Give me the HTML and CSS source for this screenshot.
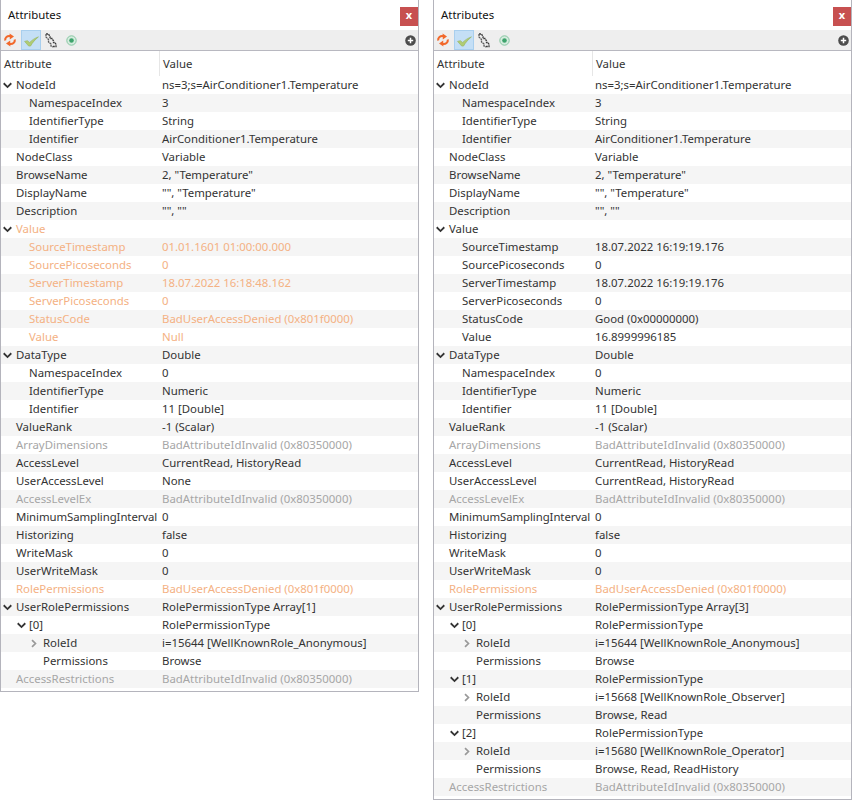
FILE: index.html
```html
<!DOCTYPE html>
<html lang="en">
<head>
<meta charset="utf-8">
<title>Attributes</title>
<link rel="stylesheet" href="styles.css">
</head>
<body>
<svg class="defs" width="0" height="0" aria-hidden="true">
  <symbol id="open" viewBox="0 0 10 7"><path d="M.8 1 5 5.2 9.2 1" fill="none" stroke="currentColor" stroke-width="2"/></symbol>
  <symbol id="closed" viewBox="0 0 7 10"><path d="M1.2 1 5.2 5 1.2 9" fill="none" stroke="currentColor" stroke-width="2"/></symbol>
  <symbol id="refresh" viewBox="0 0 14 14"><path d="M2.2 7.5C1.8 4.6 4.2 2.4 7.6 3.2" fill="none" stroke="#f2682a" stroke-width="2.1"/><path d="M6.6.4 11 3.4 6.8 6.6Z" fill="#f2682a"/><path d="M11.8 6.5C12.2 9.4 9.8 11.6 6.4 10.8" fill="none" stroke="#f2682a" stroke-width="2.1"/><path d="M7.4 13.6 3 10.6 7.2 7.4Z" fill="#f2682a"/></symbol>
  <symbol id="check" viewBox="0 0 16 12"><path d="M.6 6.4 3.6 5.6 6 7.6C8.4 5 11.4 3 15.4 1.6 12 4.4 9.2 7.4 7 11.4L5 11.4Z" fill="#b0cc74" stroke="#94b25a" stroke-width=".6"/></symbol>
  <symbol id="tree" viewBox="0 0 12 15"><path d="M1 1H3.5L5 3.5V5.5H7L8.5 8V9.5H10L11 11.5V13.5H8" fill="none" stroke="#3c3c3c" stroke-width="1.3" stroke-dasharray="2 .6"/><path d="M1 1V4L3.5 6.5V9L6 11V13L8 14" fill="none" stroke="#5c5c5c" stroke-width="1.3" stroke-dasharray="2 .6"/></symbol>
  <symbol id="target" viewBox="0 0 11 11"><circle cx="5.5" cy="5.5" r="4.7" fill="#d6ecdf" stroke="#86c6a2"/><circle cx="5.5" cy="5.5" r="2.3" fill="#3ea36c"/></symbol>
  <symbol id="add" viewBox="0 0 11 11"><circle cx="5.5" cy="5.5" r="5.3" fill="#4c4c4c"/><path d="M5.5 2.8V8.2M2.8 5.5H8.2" stroke="#fff" stroke-width="1.5"/></symbol>
</svg>
<main class="desk">
<section class="panel">
  <header class="title"><h2>Attributes</h2><button class="close">x</button></header>
  <div class="tools">
    <span class="tool"><svg class="i14"><use href="#refresh"/></svg></span>
    <span class="tool on"><svg class="i16"><use href="#check"/></svg></span>
    <span class="tool"><svg class="i-tree"><use href="#tree"/></svg></span>
    <span class="tool"><svg class="i11"><use href="#target"/></svg></span>
    <svg class="i11 plus"><use href="#add"/></svg>
  </div>
  <div class="head"><div class="hname">Attribute</div><div class="hvalue">Value</div></div>
  <div class="rows">
    <div class="row"><div class="name l0"><svg class="tw"><use href="#open"/></svg>NodeId</div><div class="val">ns=3;s=AirConditioner1.Temperature</div></div>
    <div class="row"><div class="name l1"><i class="tw"></i>NamespaceIndex</div><div class="val">3</div></div>
    <div class="row"><div class="name l1"><i class="tw"></i>IdentifierType</div><div class="val">String</div></div>
    <div class="row"><div class="name l1"><i class="tw"></i>Identifier</div><div class="val">AirConditioner1.Temperature</div></div>
    <div class="row"><div class="name l0"><i class="tw"></i>NodeClass</div><div class="val">Variable</div></div>
    <div class="row"><div class="name l0"><i class="tw"></i>BrowseName</div><div class="val">2, "Temperature"</div></div>
    <div class="row"><div class="name l0"><i class="tw"></i>DisplayName</div><div class="val">"", "Temperature"</div></div>
    <div class="row"><div class="name l0"><i class="tw"></i>Description</div><div class="val">"", ""</div></div>
    <div class="row denied"><div class="name l0"><svg class="tw"><use href="#open"/></svg>Value</div><div class="val"></div></div>
    <div class="row denied"><div class="name l1"><i class="tw"></i>SourceTimestamp</div><div class="val">01.01.1601 01:00:00.000</div></div>
    <div class="row denied"><div class="name l1"><i class="tw"></i>SourcePicoseconds</div><div class="val">0</div></div>
    <div class="row denied"><div class="name l1"><i class="tw"></i>ServerTimestamp</div><div class="val">18.07.2022 16:18:48.162</div></div>
    <div class="row denied"><div class="name l1"><i class="tw"></i>ServerPicoseconds</div><div class="val">0</div></div>
    <div class="row denied"><div class="name l1"><i class="tw"></i>StatusCode</div><div class="val">BadUserAccessDenied (0x801f0000)</div></div>
    <div class="row denied"><div class="name l1"><i class="tw"></i>Value</div><div class="val">Null</div></div>
    <div class="row"><div class="name l0"><svg class="tw"><use href="#open"/></svg>DataType</div><div class="val">Double</div></div>
    <div class="row"><div class="name l1"><i class="tw"></i>NamespaceIndex</div><div class="val">0</div></div>
    <div class="row"><div class="name l1"><i class="tw"></i>IdentifierType</div><div class="val">Numeric</div></div>
    <div class="row"><div class="name l1"><i class="tw"></i>Identifier</div><div class="val">11 [Double]</div></div>
    <div class="row"><div class="name l0"><i class="tw"></i>ValueRank</div><div class="val">-1 (Scalar)</div></div>
    <div class="row invalid"><div class="name l0"><i class="tw"></i>ArrayDimensions</div><div class="val">BadAttributeIdInvalid (0x80350000)</div></div>
    <div class="row"><div class="name l0"><i class="tw"></i>AccessLevel</div><div class="val">CurrentRead, HistoryRead</div></div>
    <div class="row"><div class="name l0"><i class="tw"></i>UserAccessLevel</div><div class="val">None</div></div>
    <div class="row invalid"><div class="name l0"><i class="tw"></i>AccessLevelEx</div><div class="val">BadAttributeIdInvalid (0x80350000)</div></div>
    <div class="row"><div class="name l0"><i class="tw"></i><span class="fit">MinimumSamplingInterval</span></div><div class="val">0</div></div>
    <div class="row"><div class="name l0"><i class="tw"></i>Historizing</div><div class="val">false</div></div>
    <div class="row"><div class="name l0"><i class="tw"></i>WriteMask</div><div class="val">0</div></div>
    <div class="row"><div class="name l0"><i class="tw"></i>UserWriteMask</div><div class="val">0</div></div>
    <div class="row denied"><div class="name l0"><i class="tw"></i>RolePermissions</div><div class="val">BadUserAccessDenied (0x801f0000)</div></div>
    <div class="row"><div class="name l0"><svg class="tw"><use href="#open"/></svg>UserRolePermissions</div><div class="val">RolePermissionType Array[1]</div></div>
    <div class="row"><div class="name l1"><svg class="tw"><use href="#open"/></svg>[0]</div><div class="val">RolePermissionType</div></div>
    <div class="row"><div class="name l2"><svg class="tw shut"><use href="#closed"/></svg>RoleId</div><div class="val">i=15644 [WellKnownRole_Anonymous]</div></div>
    <div class="row"><div class="name l2"><i class="tw"></i>Permissions</div><div class="val">Browse</div></div>
    <div class="row invalid"><div class="name l0"><i class="tw"></i>AccessRestrictions</div><div class="val">BadAttributeIdInvalid (0x80350000)</div></div>
  </div>
</section>
<section class="panel">
  <header class="title"><h2>Attributes</h2><button class="close">x</button></header>
  <div class="tools">
    <span class="tool"><svg class="i14"><use href="#refresh"/></svg></span>
    <span class="tool on"><svg class="i16"><use href="#check"/></svg></span>
    <span class="tool"><svg class="i-tree"><use href="#tree"/></svg></span>
    <span class="tool"><svg class="i11"><use href="#target"/></svg></span>
    <svg class="i11 plus"><use href="#add"/></svg>
  </div>
  <div class="head"><div class="hname">Attribute</div><div class="hvalue">Value</div></div>
  <div class="rows">
    <div class="row"><div class="name l0"><svg class="tw"><use href="#open"/></svg>NodeId</div><div class="val">ns=3;s=AirConditioner1.Temperature</div></div>
    <div class="row"><div class="name l1"><i class="tw"></i>NamespaceIndex</div><div class="val">3</div></div>
    <div class="row"><div class="name l1"><i class="tw"></i>IdentifierType</div><div class="val">String</div></div>
    <div class="row"><div class="name l1"><i class="tw"></i>Identifier</div><div class="val">AirConditioner1.Temperature</div></div>
    <div class="row"><div class="name l0"><i class="tw"></i>NodeClass</div><div class="val">Variable</div></div>
    <div class="row"><div class="name l0"><i class="tw"></i>BrowseName</div><div class="val">2, "Temperature"</div></div>
    <div class="row"><div class="name l0"><i class="tw"></i>DisplayName</div><div class="val">"", "Temperature"</div></div>
    <div class="row"><div class="name l0"><i class="tw"></i>Description</div><div class="val">"", ""</div></div>
    <div class="row"><div class="name l0"><svg class="tw"><use href="#open"/></svg>Value</div><div class="val"></div></div>
    <div class="row"><div class="name l1"><i class="tw"></i>SourceTimestamp</div><div class="val">18.07.2022 16:19:19.176</div></div>
    <div class="row"><div class="name l1"><i class="tw"></i>SourcePicoseconds</div><div class="val">0</div></div>
    <div class="row"><div class="name l1"><i class="tw"></i>ServerTimestamp</div><div class="val">18.07.2022 16:19:19.176</div></div>
    <div class="row"><div class="name l1"><i class="tw"></i>ServerPicoseconds</div><div class="val">0</div></div>
    <div class="row"><div class="name l1"><i class="tw"></i>StatusCode</div><div class="val">Good (0x00000000)</div></div>
    <div class="row"><div class="name l1"><i class="tw"></i>Value</div><div class="val">16.8999996185</div></div>
    <div class="row"><div class="name l0"><svg class="tw"><use href="#open"/></svg>DataType</div><div class="val">Double</div></div>
    <div class="row"><div class="name l1"><i class="tw"></i>NamespaceIndex</div><div class="val">0</div></div>
    <div class="row"><div class="name l1"><i class="tw"></i>IdentifierType</div><div class="val">Numeric</div></div>
    <div class="row"><div class="name l1"><i class="tw"></i>Identifier</div><div class="val">11 [Double]</div></div>
    <div class="row"><div class="name l0"><i class="tw"></i>ValueRank</div><div class="val">-1 (Scalar)</div></div>
    <div class="row invalid"><div class="name l0"><i class="tw"></i>ArrayDimensions</div><div class="val">BadAttributeIdInvalid (0x80350000)</div></div>
    <div class="row"><div class="name l0"><i class="tw"></i>AccessLevel</div><div class="val">CurrentRead, HistoryRead</div></div>
    <div class="row"><div class="name l0"><i class="tw"></i>UserAccessLevel</div><div class="val">CurrentRead, HistoryRead</div></div>
    <div class="row invalid"><div class="name l0"><i class="tw"></i>AccessLevelEx</div><div class="val">BadAttributeIdInvalid (0x80350000)</div></div>
    <div class="row"><div class="name l0"><i class="tw"></i><span class="fit">MinimumSamplingInterval</span></div><div class="val">0</div></div>
    <div class="row"><div class="name l0"><i class="tw"></i>Historizing</div><div class="val">false</div></div>
    <div class="row"><div class="name l0"><i class="tw"></i>WriteMask</div><div class="val">0</div></div>
    <div class="row"><div class="name l0"><i class="tw"></i>UserWriteMask</div><div class="val">0</div></div>
    <div class="row denied"><div class="name l0"><i class="tw"></i>RolePermissions</div><div class="val">BadUserAccessDenied (0x801f0000)</div></div>
    <div class="row"><div class="name l0"><svg class="tw"><use href="#open"/></svg>UserRolePermissions</div><div class="val">RolePermissionType Array[3]</div></div>
    <div class="row"><div class="name l1"><svg class="tw"><use href="#open"/></svg>[0]</div><div class="val">RolePermissionType</div></div>
    <div class="row"><div class="name l2"><svg class="tw shut"><use href="#closed"/></svg>RoleId</div><div class="val">i=15644 [WellKnownRole_Anonymous]</div></div>
    <div class="row"><div class="name l2"><i class="tw"></i>Permissions</div><div class="val">Browse</div></div>
    <div class="row"><div class="name l1"><svg class="tw"><use href="#open"/></svg>[1]</div><div class="val">RolePermissionType</div></div>
    <div class="row"><div class="name l2"><svg class="tw shut"><use href="#closed"/></svg>RoleId</div><div class="val">i=15668 [WellKnownRole_Observer]</div></div>
    <div class="row"><div class="name l2"><i class="tw"></i>Permissions</div><div class="val">Browse, Read</div></div>
    <div class="row"><div class="name l1"><svg class="tw"><use href="#open"/></svg>[2]</div><div class="val">RolePermissionType</div></div>
    <div class="row"><div class="name l2"><svg class="tw shut"><use href="#closed"/></svg>RoleId</div><div class="val">i=15680 [WellKnownRole_Operator]</div></div>
    <div class="row"><div class="name l2"><i class="tw"></i>Permissions</div><div class="val">Browse, Read, ReadHistory</div></div>
    <div class="row invalid"><div class="name l0"><i class="tw"></i>AccessRestrictions</div><div class="val">BadAttributeIdInvalid (0x80350000)</div></div>
  </div>
</section>
</main>
</body>
</html>
```

FILE: styles.css
```css
* { box-sizing: border-box; }
html, body { margin: 0; padding: 0; background: #fff; }
body { font-family: "Noto Sans", "Liberation Sans", sans-serif; font-size: 11.4px; color: #333; }
.defs { position: absolute; }
.desk { display: flex; align-items: flex-start; gap: 14px; }
.panel { width: 419px; border: 1px solid #b4b4bc; border-top: 0; background: #fff; padding-bottom: 3px; }
.title { height: 30px; display: flex; align-items: center; justify-content: space-between; padding: 0 0 1px 7px; }
.title h2 { margin: 0; font-size: 11.4px; font-weight: 400; color: #111; }
.close { width: 18px; height: 19px; margin: 3px 0 0; padding: 0 0 3px; border: 0; background: #c75050; color: #fff; font: 700 11px "Noto Sans", sans-serif; }
.tools { height: 21px; display: flex; align-items: center; background: #eee; border-bottom: 1px solid #b8b8c0; padding-right: 2px; }
.tool { width: 20px; height: 20px; display: flex; align-items: center; justify-content: center; }
.tool:first-child { width: 18px; margin-right: 2px; }
.tool.on { background: #c4dff6; border: 1px solid #a9cfee; }
.i14 { width: 14px; height: 14px; }
.i-tree { width: 12px; height: 15px; }
.i16 { width: 15px; height: 12px; margin-top: 2px; }
.i11 { width: 11px; height: 11px; }
.plus { margin-left: auto; }
.head { height: 25px; display: grid; grid-template-columns: 158px 1fr; align-items: stretch; }
.hname { padding: 5px 0 0 3px; }
.hvalue { padding: 5px 0 0 3px; border-left: 1px solid #e6e6e6; }
.row { height: 18px; line-height: 18px; display: grid; grid-template-columns: 160px 1fr; white-space: nowrap; }
.row:nth-child(even) { background: #f5f5f5; }
.name { display: flex; align-items: center; }
.fit { letter-spacing: -.08px; }
.val { padding-left: 1px; }
.l0 { padding-left: 2px; }
.l1 { padding-left: 16px; }
.l2 { padding-left: 29px; }
.tw { flex: none; width: 9px; height: 7px; margin: 0 4px 0 0; color: #333; }
.l1 .tw { margin-right: 3px; }
i.tw { height: 0; }
.l0 i.tw { margin-right: 4px; }
.tw.shut { color: #999; width: 6px; height: 9px; margin: 0 6px 0 1px; }
.denied { color: #f4b183; }
.denied .tw { color: #333; }
.invalid { color: #a6a6a6; }
```
